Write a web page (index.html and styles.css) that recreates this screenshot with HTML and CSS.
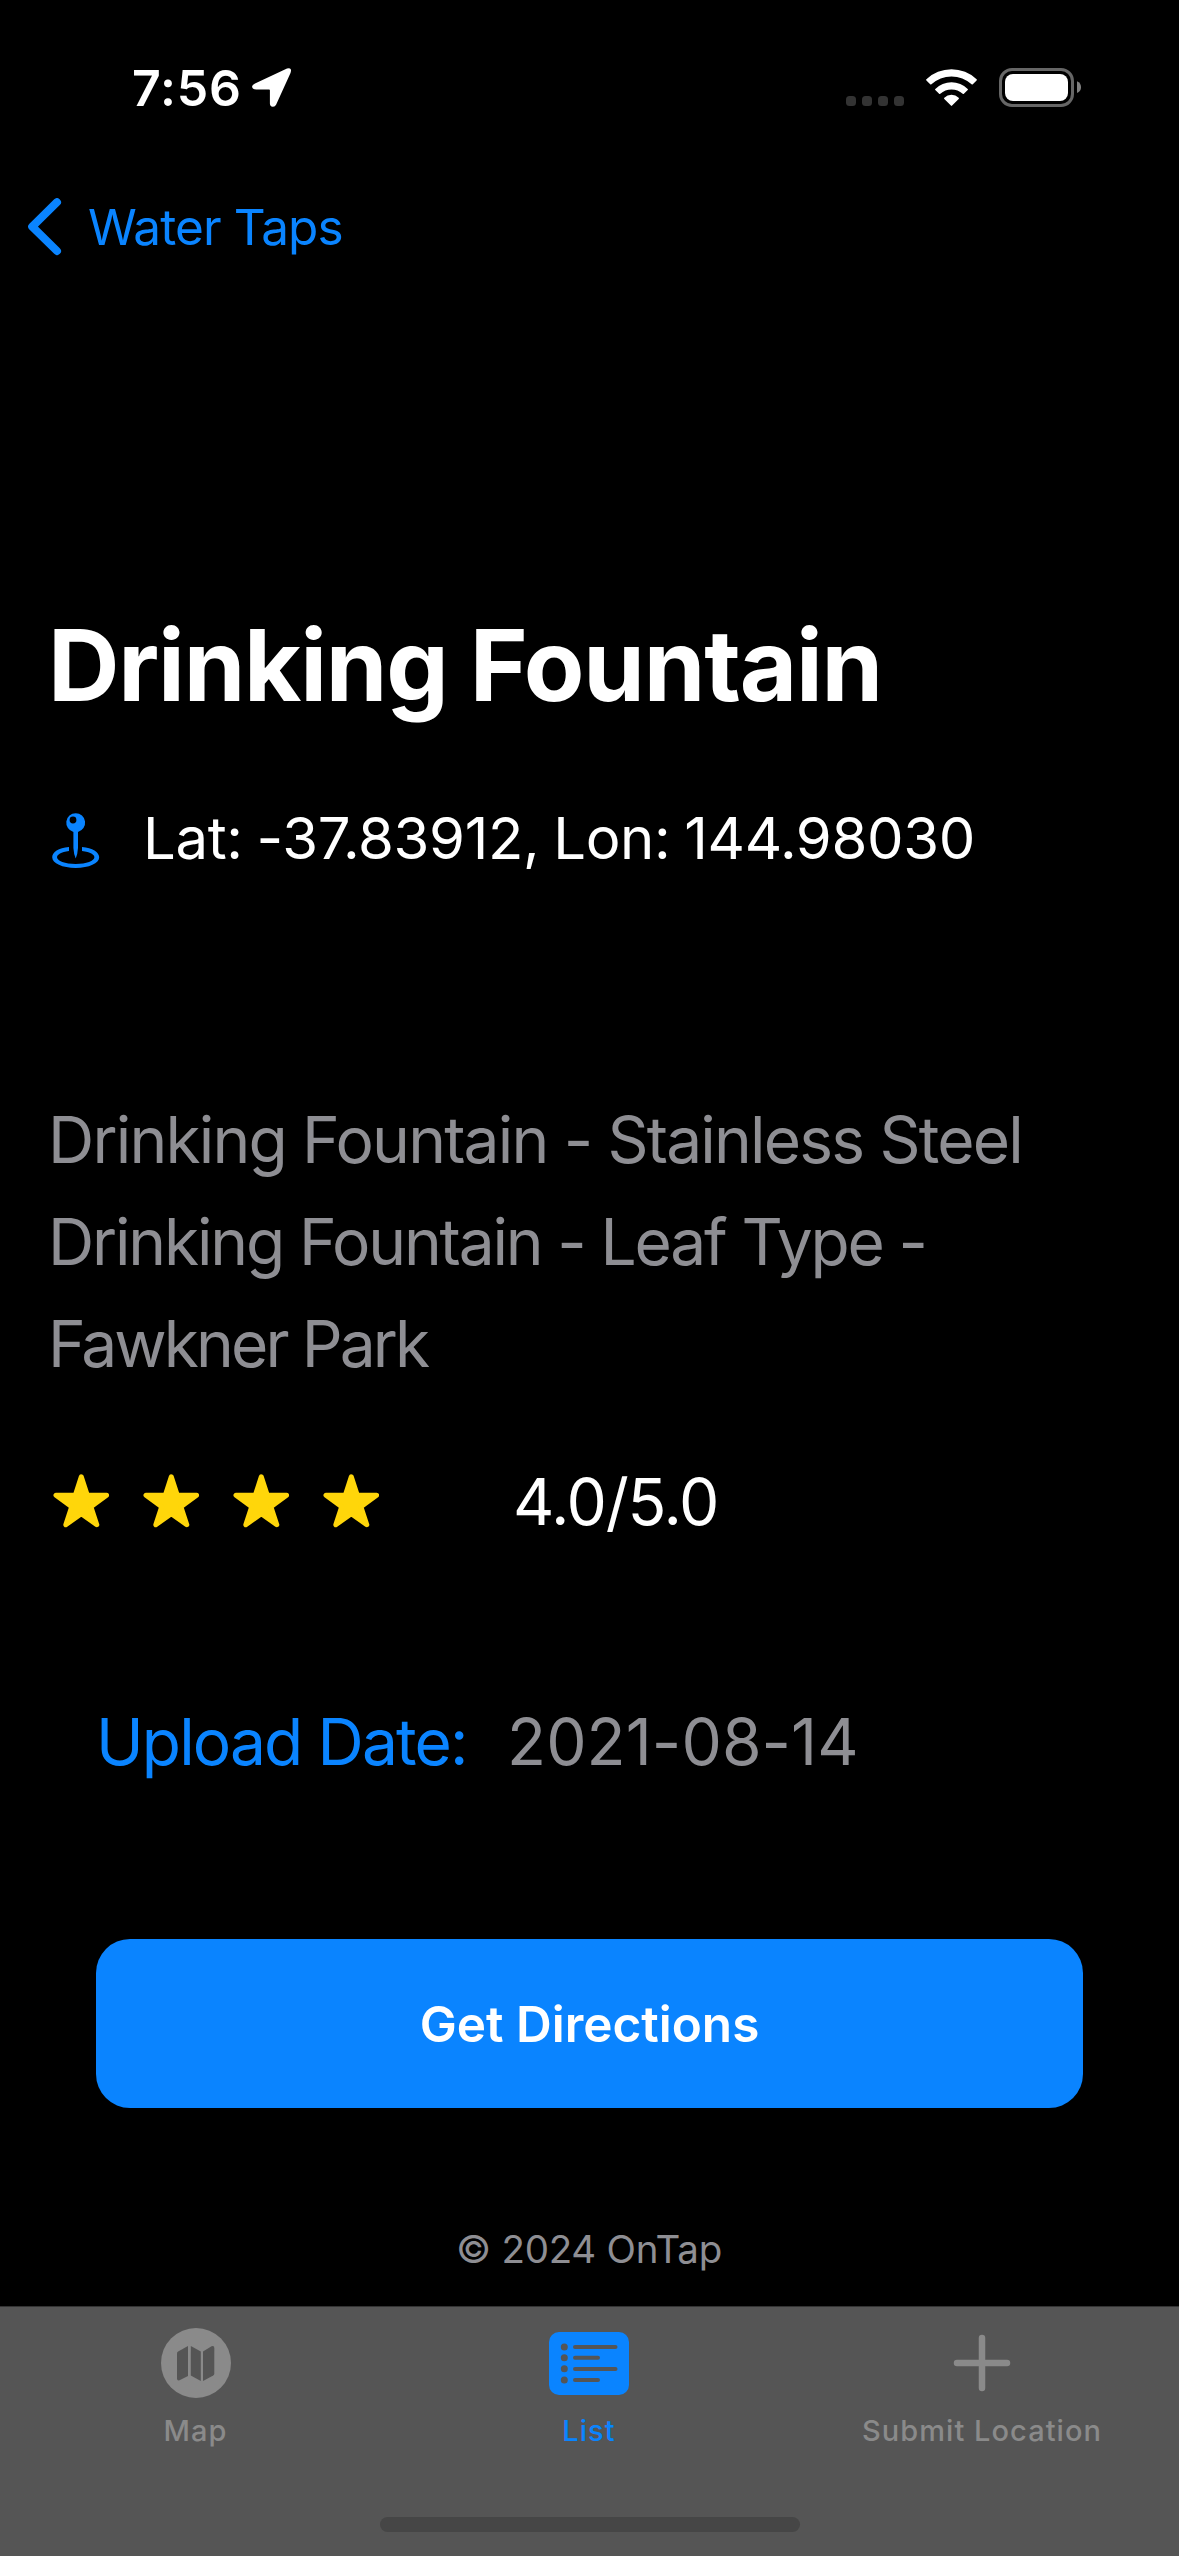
FILE: index.html
```html
<!DOCTYPE html>
<html lang="en">
<head>
<meta charset="utf-8">
<title>Drinking Fountain</title>
<link rel="stylesheet" href="styles.css">
</head>
<body>
<div class="screen">
  <header class="status">
    <div class="status-left">
      <span class="clock">7:56</span>
      <svg class="arrow" width="40" height="40" viewBox="252 69 40 40"><path d="M255 84.6 L287 69.6 Q289.500 68.500 290.600 70 Q291.500 71.400 290.500 74 L276.200 105.400 Q275 107.900 272.700 107.700 Q269.900 107.300 269.900 104.400 L269.900 91.300 Q269.900 90.500 269.100 90.500 L256 90.400 Q252.500 90.300 252.100 87.700 Q252 85.900 255 84.600Z"/></svg>
    </div>
    <svg class="indicators" width="236" height="40" viewBox="846 68 236 40">
      <g fill="#333"><rect x="846" y="96" width="10" height="10" rx="3.500"/><rect x="862" y="96" width="10" height="10" rx="3.500"/><rect x="878" y="96" width="10" height="10" rx="3.500"/><rect x="894" y="96" width="10" height="10" rx="3.500"/></g>
      <g fill="#fff">
        <path d="M926.400 79.200 A36.500 36.500 0 0 1 976.600 79.200 Q977.200 79.800 976.600 80.400 L972.800 84.300 Q972.200 84.900 971.600 84.300 A29.500 29.500 0 0 0 931.400 84.300 Q930.800 84.900 930.200 84.300 L926.400 80.400 Q925.800 79.800 926.400 79.200Z"/>
        <path d="M935.300 88.900 A23 23 0 0 1 967.700 88.900 Q968.300 89.500 967.700 90.100 L963.900 93.800 Q963.300 94.400 962.700 93.800 A16.500 16.500 0 0 0 940.300 93.800 Q939.700 94.400 939.100 93.800 L935.300 90.100 Q934.700 89.500 935.300 88.900Z"/>
        <path d="M944.300 97.700 A10.500 10.500 0 0 1 958.700 97.700 Q959.300 98.300 958.700 98.900 L952.100 105.600 Q951.500 106.200 950.900 105.600 L944.300 98.900 Q943.700 98.300 944.300 97.700Z"/>
        <rect x="1005" y="74" width="63" height="27" rx="8"/>
      </g>
      <rect x="1000.500" y="69.500" width="72" height="36" rx="11.500" fill="none" stroke="#666" stroke-width="3"/>
      <path d="M1077 81.300 Q1081 83 1081 87.200 Q1081 91.400 1077 93Z" fill="#808080"/>
    </svg>
  </header>

  <nav class="nav">
    <svg class="chevron" width="34" height="58" viewBox="28 198 34 58"><path d="M57 202.200 L32.200 226.600 L57 251"/></svg>
    <span class="back">Water Taps</span>
  </nav>

  <main class="detail">
    <h1 class="title">Drinking Fountain</h1>

    <div class="coords">
      <svg class="pin" width="48" height="56" viewBox="52 813 48 56">
        <path fill-rule="evenodd" d="M75.700 813.200 a9.500 9.500 0 0 1 2.300 18.700 L78 848 Q77.600 854.500 75.700 858.500 Q73.800 854.500 73.400 848 L73.400 831.900 A9.500 9.500 0 0 1 75.700 813.200Z M73 816.600 a3.400 3.400 0 1 0 0 6.800 a3.400 3.400 0 1 0 0 -6.800Z"/>
        <path d="M69 846.900 L69 850.900 C61 851.900 57 854.500 57 857.200 C57 860.700 65 863.900 75.700 863.900 C86.400 863.900 94.400 860.700 94.400 857.200 C94.400 854.500 90.500 851.900 82 850.900 L82 846.900 C92.500 848 99.200 852 99.200 857.200 C99.200 863.200 89 867.900 75.700 867.900 C62.400 867.900 52.200 863.200 52.200 857.200 C52.200 852 58.500 848 69 846.900Z"/>
      </svg>
      <span>Lat: -37.83912, Lon: 144.98030</span>
    </div>

    <p class="description">
      <span class="line">Drinking Fountain - Stainless Steel</span>
      <span class="line line-snug">Drinking Fountain - Leaf Type -</span>
      <span class="line line-tight">Fawkner Park</span>
    </p>

    <div class="rating">
      <svg class="stars" width="326" height="54" viewBox="0 0 326 54">
        <defs><path id="star" d="M28.300 2.900 L34.300 21.200 L53.600 21.200 L37.900 32.700 L43.800 50.700 L28.300 39.600 L12.800 50.700 L18.700 32.700 L3 21.200 L22.300 21.200Z"/></defs>
        <use href="#star"/><use href="#star" x="90"/><use href="#star" x="180"/><use href="#star" x="270"/>
      </svg>
      <span class="score">4.0/5.0</span>
    </div>

    <div class="upload">
      <span class="upload-label">Upload Date:</span>
      <span class="upload-date">2021-08-14</span>
    </div>

    <button class="directions">Get Directions</button>
    <p class="copyright">© 2024 OnTap</p>
  </main>

  <footer class="tabbar">
    <div class="tabs">
      <div class="tab">
        <svg width="70" height="70" viewBox="0 0 70 70"><circle cx="35" cy="35" r="35" fill="currentColor"/><g fill="#555"><path d="M16 25.500 Q16 24.200 17.100 23.500 L27 18 L27 48 L18.500 52.300 Q16 53 16 50.500Z"/><path d="M29.800 18 L39.800 23.500 L39.800 53 L29.800 47.500Z"/><path d="M42 23.500 L50.500 18.200 Q53.300 17.200 53.300 20 L53.300 45.500 Q53.300 46.800 52.200 47.500 L42 53Z"/></g></svg>
        <span>Map</span>
      </div>
      <div class="tab tab-active">
        <svg width="80" height="70" viewBox="0 0 80 70"><rect y="4" width="80" height="63" rx="10" fill="currentColor"/><g fill="#555"><circle cx="15.300" cy="19" r="3.500"/><circle cx="15.300" cy="29.800" r="3.500"/><circle cx="15.300" cy="40.800" r="3.500"/><circle cx="15.300" cy="52" r="3.500"/><rect x="24" y="17" width="44.500" height="4" rx="2"/><rect x="24" y="27.800" width="27" height="4" rx="2"/><rect x="24" y="39" width="44.500" height="4" rx="2"/><rect x="24" y="50" width="27" height="4" rx="2"/></g></svg>
        <span>List</span>
      </div>
      <div class="tab">
        <svg width="70" height="70" viewBox="0 0 70 70"><path d="M35 10 V60 M10 35 H60" fill="none" stroke="currentColor" stroke-width="6.500" stroke-linecap="round"/></svg>
        <span>Submit Location</span>
      </div>
    </div>
    <div class="home-indicator"></div>
  </footer>
</div>
</body>
</html>
```
FILE: styles.css
```css
* { box-sizing: border-box; }

body {
  margin: 0;
  background: #000;
  color: #fff;
  font-family: Inter, "Liberation Sans", sans-serif;
}

h1, p { margin: 0; }
svg { display: block; flex: none; }

.screen {
  display: flex;
  flex-direction: column;
  width: 1179px;
  height: 2556px;
  overflow: hidden;
  white-space: nowrap;
}

.status {
  display: flex;
  align-items: center;
  justify-content: space-between;
  height: 176px;
  padding: 0 97px 0 132px;
}

.status-left { display: flex; align-items: center; gap: 10px; }
.clock { font-size: 50px; font-weight: 600; letter-spacing: 0.8px; }
.arrow { fill: #fff; }

.nav {
  display: flex;
  align-items: center;
  gap: 26px;
  height: 102px;
  padding-left: 28px;
  color: #0a84ff;
}

.chevron {
  fill: none;
  stroke: currentColor;
  stroke-width: 8px;
  stroke-linecap: round;
  stroke-linejoin: round;
}

.back { font-size: 49.5px; letter-spacing: -0.9px; }

.detail {
  display: flex;
  flex-direction: column;
  flex: 1;
  padding: 327px 48px 0;
}

.title {
  font-size: 99px;
  font-weight: 700;
  line-height: 120px;
  letter-spacing: -1.23px;
}

.coords {
  display: flex;
  align-items: center;
  gap: 43px;
  height: 72px;
  margin-top: 77px;
  padding-left: 4px;
  font-size: 58px;
  letter-spacing: -0.35px;
  word-spacing: -2px;
}

.pin { margin-top: 6px; fill: #0a84ff; }

.description {
  margin-top: 215px;
  color: #8e8e93;
  font-size: 64px;
  line-height: 102px;
  letter-spacing: -1.8px;
}

.line { display: block; }
.line-snug { letter-spacing: -2.15px; }
.line-tight { letter-spacing: -2.9px; }

.rating {
  display: flex;
  align-items: center;
  gap: 134px;
  height: 80px;
  margin-top: 66px;
  padding-left: 5px;
}

.stars {
  fill: #ffd60a;
  stroke: #ffd60a;
  stroke-width: 5px;
  stroke-linejoin: round;
}

.score { font-size: 64px; letter-spacing: -1.24px; }

.upload {
  display: grid;
  grid-template-columns: 411px 1fr;
  margin-top: 161px;
  padding-left: 48px;
  font-size: 64px;
  line-height: 80px;
}

.upload-label { color: #0a84ff; letter-spacing: -1.84px; }
.upload-date { color: #8e8e93; letter-spacing: 0.1px; }

.directions {
  height: 169px;
  margin: 157px 48px 0;
  padding: 0;
  border: 0;
  border-radius: 34px;
  background: #0a84ff;
  color: #fff;
  font: 600 49.5px Inter, "Liberation Sans", sans-serif;
}

.copyright {
  margin-top: 117px;
  padding-right: 1px;
  color: #8e8e93;
  font-size: 38.5px;
  line-height: 48px;
  letter-spacing: -0.25px;
  text-align: center;
}

.tabbar {
  display: flex;
  flex-direction: column;
  justify-content: space-between;
  align-items: center;
  height: 250px;
  padding: 21px 0 24px;
  border-top: 1px solid #333;
  background: #555;
}

.tabs {
  display: grid;
  grid-template-columns: 391px 396px 390px;
  width: 100%;
}

.tab {
  display: flex;
  flex-direction: column;
  align-items: center;
  gap: 13px;
  color: #8a8a8a;
  font-size: 29px;
  font-weight: 500;
  line-height: 40px;
  letter-spacing: 1.05px;
}

.tab-active { color: #0a84ff; }

.home-indicator {
  width: 420px;
  height: 15px;
  border-radius: 7.5px;
  background: #464646;
}
```
